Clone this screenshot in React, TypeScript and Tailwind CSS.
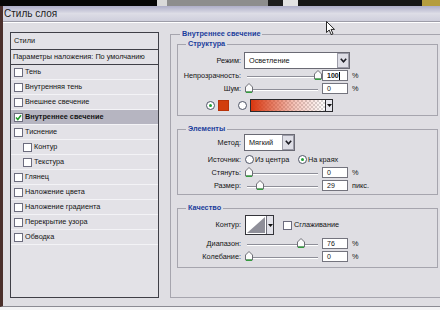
import React from 'react';

const layers: { name: string; checked?: boolean; selected?: boolean; indent?: boolean }[] = [
  { name: 'Тень' },
  { name: 'Внутренняя тень' },
  { name: 'Внешнее свечение' },
  { name: 'Внутреннее свечение', checked: true, selected: true },
  { name: 'Тиснение' },
  { name: 'Контур', indent: true },
  { name: 'Текстура', indent: true },
  { name: 'Глянец' },
  { name: 'Наложение цвета' },
  { name: 'Наложение градиента' },
  { name: 'Перекрытие узора' },
  { name: 'Обводка' },
];

const Checkbox = ({ checked }: { checked?: boolean }) => (
  <span className="w-[9px] h-[9px] shrink-0 border border-[#6c6c7e] bg-white flex items-center justify-center">
    {checked && (
      <svg width="7" height="7" viewBox="0 0 7 7">
        <path d="M1 3.5 L2.8 5.5 L6 1.2" fill="none" stroke="#1f9a2a" strokeWidth="1.5" />
      </svg>
    )}
  </span>
);

const Radio = ({ checked }: { checked?: boolean }) => (
  <span className="w-[9px] h-[9px] shrink-0 rounded-full border border-[#4e5466] bg-white flex items-center justify-center">
    {checked && <span className="w-[3px] h-[3px] rounded-full bg-[#21a035]" />}
  </span>
);

const Chevron = () => (
  <svg width="7" height="5" viewBox="0 0 7 5">
    <path d="M0.8 0.8 L3.5 3.8 L6.2 0.8" fill="none" stroke="#1c1c24" strokeWidth="1.6" />
  </svg>
);

const Select = ({ value, width }: { value: string; width: string }) => (
  <div className={`flex h-[17px] border border-[#6a6a74] bg-white ${width}`}>
    <span className="flex-1 pl-[4px] flex items-center">{value}</span>
    <span className="w-[12px] border border-[#9c9ca8] bg-[#dedee6] flex items-center justify-center">
      <Chevron />
    </span>
  </div>
);

// slider thumb offset in px from the left end of the track
const Slider = ({ at }: { at: number }) => (
  <div className="relative w-[77px] h-[11px] flex items-center shrink-0">
    <div className="mx-[3px] mt-[3px] w-full h-[2px] border-t border-[#8e8e98] border-b border-b-white" />
    <svg className="absolute top-0" style={{ left: at + 1 }} width="8" height="10" viewBox="0 0 8 10">
      <path d="M0.5 9 V4 L4 0.5 L7.5 4 V9 Z" fill="#fbfbfb" stroke="#6e6e76" />
      <path d="M1 9.2 H7" stroke="#2a9a34" strokeWidth="1.4" />
    </svg>
  </div>
);

const Field = ({ value, bold }: { value: string; bold?: boolean }) => (
  <div className="ml-[1px] w-[26px] h-[11px] shrink-0 border border-[#74747e] bg-white pl-[4px] flex items-center text-[7px]">
    <span className={bold ? 'font-bold' : ''}>{value}</span>
    {bold && <span className="w-px h-[8px] bg-black" />}
  </div>
);

const Row = ({ label, className, children }: { label: string; className: string; children: React.ReactNode }) => (
  <div className={`flex items-center ${className}`}>
    <span className="w-[64px] shrink-0 text-right pr-[1px] whitespace-nowrap">{label}</span>
    <div className="ml-[2px] flex items-center">{children}</div>
  </div>
);

const SliderRow = ({ label, at, value, unit, bold }: { label: string; at: number; value: string; unit: string; bold?: boolean }) => (
  <Row label={label} className="h-[13px]">
    <Slider at={at} />
    <Field value={value} bold={bold} />
    <span className="ml-[4px]">{unit}</span>
  </Row>
);

const Legend = ({ children, className }: { children: React.ReactNode; className: string }) => (
  <legend className={`px-[2px] font-bold text-[#1b3d9c] leading-[10px] ${className}`}>{children}</legend>
);

export default function App() {
  return (
    <div className="relative w-[440px] h-[310px] overflow-hidden bg-[#f3f3f5] text-[7.3px] leading-none text-[#141414] font-['Liberation_Sans',Arial,sans-serif]">
      {/* windows behind the dialog */}
      <div className="flex h-[6px]">
        <div className="w-[157px] bg-[#060606]" />
        <div className="w-[10px] bg-[#d9d9d9]" />
        <div className="w-[101px] bg-[#8d8d8d]" />
        <div className="w-[15px] bg-[#1e1e1e]" />
        <div className="w-[15px] bg-[#e2e2e2]" />
        <div className="flex-1 bg-[#171717]" />
        <div className="w-[18px] bg-[#b59d3e]" />
      </div>

      <div className="flex flex-col h-[301px] border-l-[3px] border-[#4b2f2b] border-b border-b-[#8c8c94]">
        <div className="h-[16px] shrink-0 flex items-center pl-[1px] text-[10px] text-[#1b1b22] bg-gradient-to-b from-[#aeaec8] via-[#dddde6] to-[#cfcfdc] border-b border-b-[#9d9da8]">
          Стиль слоя
        </div>

        <div className="flex-1 flex items-start pl-[7px] pt-[6px] bg-[#dfdee3] border-t border-t-white">
          {/* styles list */}
          <div className="w-[149px] h-[266px] mt-[3px] shrink-0 flex flex-col border border-[#3f3f47] bg-[#e3e2e7]">
            <div className="h-[17px] shrink-0 flex items-center pl-[3px] border-b border-[#3f3f47]">Стили</div>
            <div className="h-[15px] shrink-0 flex items-center pl-[2px] border-b border-[#3f3f47] whitespace-nowrap">
              Параметры наложения: По умолчанию
            </div>
            {layers.map((l) => (
              <div
                key={l.name}
                className={`h-[15px] shrink-0 flex items-center gap-[2px] border-b border-[#f3f3f6] ${l.indent ? 'pl-[12px]' : 'pl-[3px]'} ${l.selected ? 'bg-[#b6b5c1] font-bold' : ''}`}
              >
                <Checkbox checked={l.checked} />
                <span className="whitespace-nowrap">{l.name}</span>
              </div>
            ))}
          </div>

          {/* inner glow settings */}
          <fieldset className="ml-[11px] w-[275px] h-[269px] shrink-0 min-w-0 border border-[#a6a5ae] px-[6px]">
            <Legend className="ml-[3px]">Внутреннее свечение</Legend>

            <fieldset className="min-w-0 border border-[#a6a5ae] pb-[3px]">
              <Legend className="ml-[8px]">Структура</Legend>
              <Row label="Режим:" className="mt-[3px] h-[17px]">
                <Select value="Осветление" width="w-[106px]" />
              </Row>
              <SliderRow label="Непрозрачность:" at={69} value="100" unit="%" bold />
              <SliderRow label="Шум:" at={0} value="0" unit="%" />
              <div className="mt-[4px] h-[13px] flex items-center pl-[28px]">
                <Radio checked />
                <span className="ml-[3px] w-[11px] h-[11px] bg-[#d23d0c] border border-[#b83208]" />
                <span className="ml-[9px]"><Radio /></span>
                <div className="ml-[3px] w-[83px] h-[13px] flex border border-[#2a2a2e]">
                  <div className="flex-1 bg-[linear-gradient(to_right,#d8360e,rgba(226,90,60,0.35)_60%,rgba(255,255,255,0)),repeating-conic-gradient(#d6d6d6_0_25%,#ffffff_0_50%)] [background-size:100%_100%,4px_4px]" />
                  <div className="w-[7px] border-l border-[#2a2a2e] bg-[#e6e6ec] flex items-center justify-center">
                    <svg width="5" height="3" viewBox="0 0 5 3"><path d="M0 0 H5 L2.5 3 Z" fill="#111" /></svg>
                  </div>
                </div>
              </div>
            </fieldset>

            <fieldset className="mt-[8px] min-w-0 border border-[#a6a5ae] pb-[2px]">
              <Legend className="ml-[8px]">Элементы</Legend>
              <Row label="Метод:" className="h-[17px]">
                <Select value="Мягкий" width="w-[51px]" />
              </Row>
              <Row label="Источник:" className="mt-[2px] h-[13px]">
                <div className="w-[54px] flex items-center">
                  <span className="ml-[1px]"><Radio /></span>
                  <span className="ml-[1px] whitespace-nowrap">Из центра</span>
                </div>
                <Radio checked />
                <span className="ml-[1px] whitespace-nowrap">На краях</span>
              </Row>
              <SliderRow label="Стянуть:" at={0} value="0" unit="%" />
              <SliderRow label="Размер:" at={11} value="29" unit="пикс." />
            </fieldset>

            <fieldset className="mt-[8px] min-w-0 border border-[#a6a5ae] pb-[4px]">
              <Legend className="ml-[8px]">Качество</Legend>
              <Row label="Контур:" className="mt-[2px] h-[20px]">
                <div className="ml-[1px] w-[29px] h-[20px] flex border border-[#34343a] bg-white">
                  <svg width="20" height="18" viewBox="0 0 20 18" className="shrink-0">
                    <path d="M1 17 L19 1 L19 17 Z" fill="#8f8f99" />
                  </svg>
                  <div className="flex-1 border-l border-[#6e6e78] bg-[#e3e3ea] flex items-center justify-center">
                    <svg width="5" height="3" viewBox="0 0 5 3"><path d="M0 0 H5 L2.5 3 Z" fill="#111" /></svg>
                  </div>
                </div>
                <span className="ml-[9px]"><Checkbox /></span>
                <span className="ml-[2px] whitespace-nowrap">Сглаживание</span>
              </Row>
              <div className="mt-[2px]">
                <SliderRow label="Диапазон:" at={52} value="76" unit="%" />
              </div>
              <SliderRow label="Колебание:" at={0} value="0" unit="%" />
            </fieldset>
          </fieldset>
        </div>
      </div>

      {/* mouse pointer */}
      <svg className="absolute left-[326px] top-[21px]" width="10" height="15" viewBox="0 0 10 15">
        <path d="M0.5 0.5 V11.5 L3.2 9 L5.2 13.6 L7 12.8 L5 8.4 H8.5 Z" fill="#fff" stroke="#111" strokeWidth="0.9" strokeLinejoin="round" />
      </svg>
    </div>
  );
}
